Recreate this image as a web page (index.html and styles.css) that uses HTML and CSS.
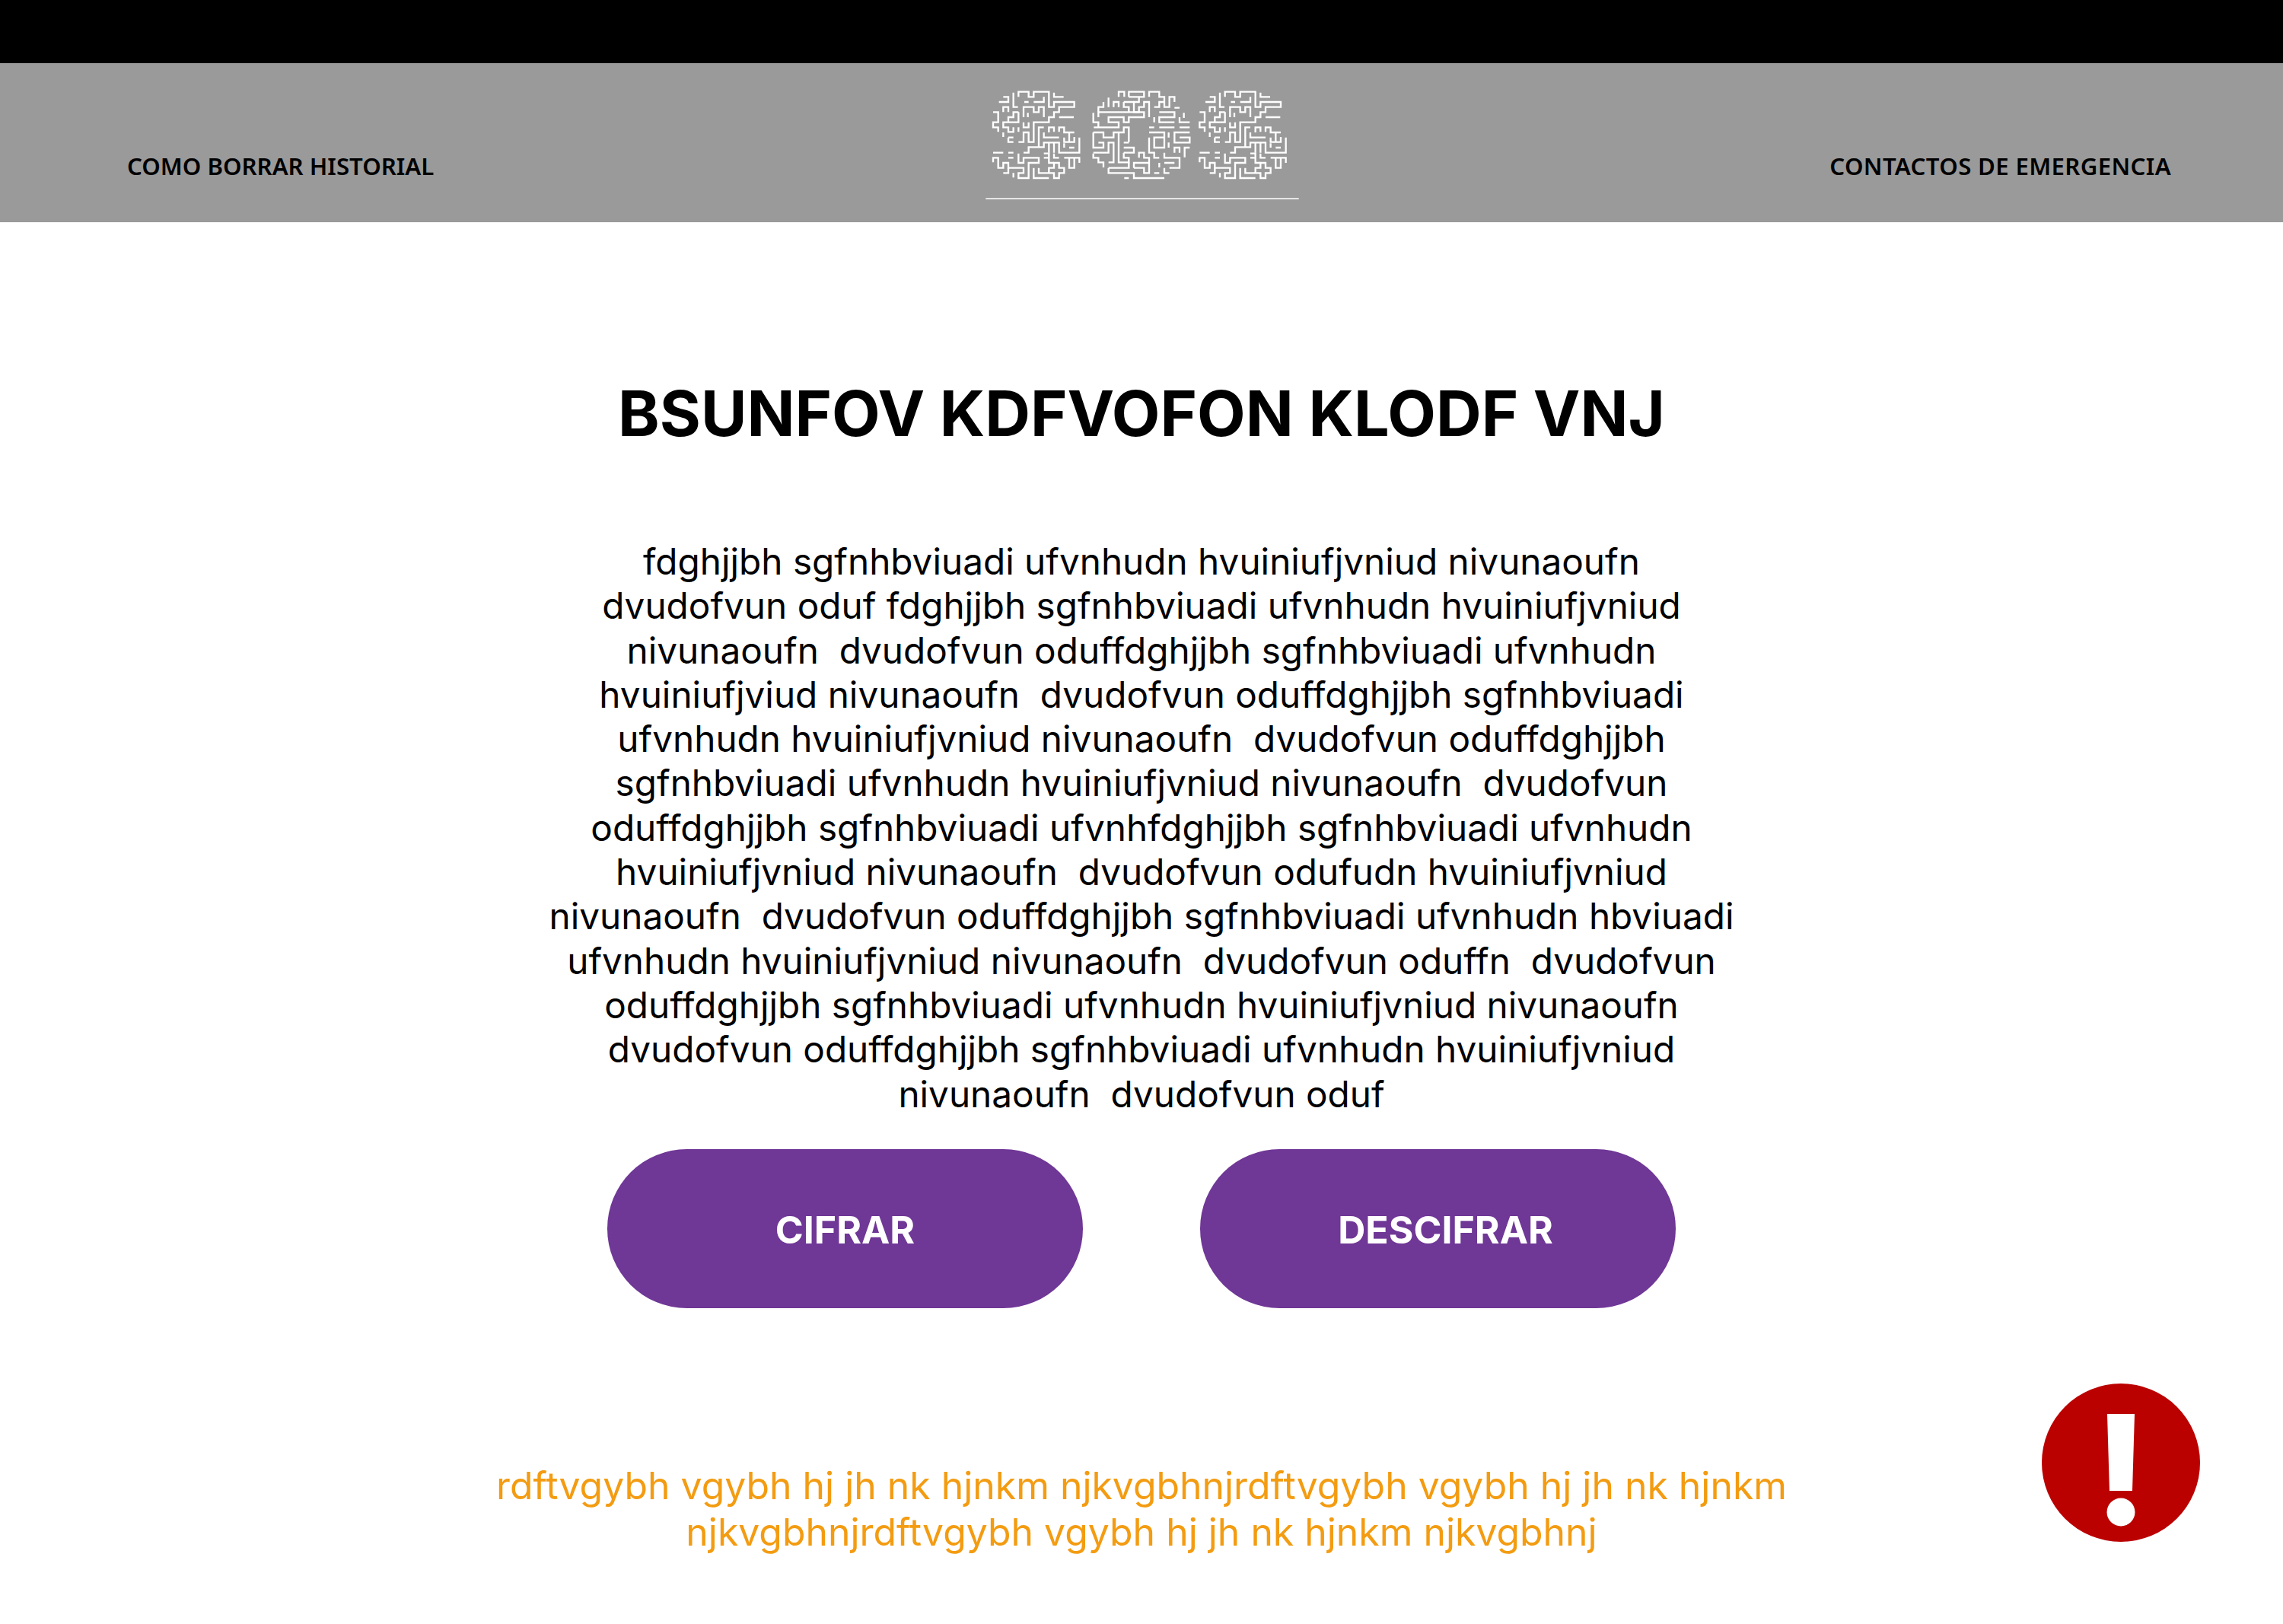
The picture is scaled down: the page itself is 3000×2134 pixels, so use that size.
FILE: index.html
```html
<!DOCTYPE html>
<html lang="es">
<head>
    <meta charset="UTF-8">
    <meta name="viewport" content="width=device-width, initial-scale=1.0">
    <title>SOS</title>
    <link rel="stylesheet" href="styles.css">
</head>
<body>

<div class="top-bar"></div>

<header class="site-header">
    <a class="nav-link nav-link-left" href="#">COMO BORRAR HISTORIAL</a>
    <div class="logo">
        <svg class="logo-maze" viewBox="0 0 1380 570" width="460" height="190" aria-label="SOS">
            <g id="maze-s" class="maze-lines">
                <path d="M128 132H165V112H145M185 95V152H203M205 112V92H245V112H265V92H325V152H345V132H425V152H365V172H345V192H325V212H265V290H245V252H225V290H205"/>
                <path d="M228 132H245M265 132H305V112M345 95V112H383M145 172V152H165V172M225 192V152H265V172H285V152H305V192M242 175V192M365 192H423"/>
                <path d="M105 172H125V212H105V232H125V250M205 172H185V192H165V212H145V232H165V250H185V232M205 172V212H165M205 232V250M225 212V232H245V212"/>
                <path d="M165 272V290H185M165 272H185M145 252V270M305 232H285V310M305 252V272H365M325 252V232H345V250M365 250V232H385V252H405V290H425V270M405 252H425M385 272V290H405"/>
                <path d="M445 272V332H365V292H305V310H245V332H225M325 292V332M345 332V292M405 312H425M385 295V312M105 332H145M165 332H185M165 352H185"/>
                <path d="M105 370V352H125V392H145V372H165V392H225V412H205V432H245V372H285V352H225V372H205V335M305 335H325V352H305M325 352V372H345M345 335V352H365M385 352H445V372M405 352V392H425V352"/>
                <path d="M265 392V432H325M285 392V412H325V392H345V372H365V392H385V412H365V432H345V412H325M145 412H165V392M185 412V430"/>
            </g>
            <g class="maze-lines">
                <path d="M600 112V92H622V112M640 112V92H700V112H680V132H660V172H680V152H700V132H720V192M640 112H680M720 112V92H760V112H780V132H760V152H740M780 132V152H800V112H820V132"/>
                <path d="M560 115V152M580 152V132H600V152M620 132H660M620 132V152H640V172M520 172V152H540V132M820 155H840"/>
                <path d="M520 192V172H700V192H640V212H620V192H560V212H600V232H520V212H500V175M502 232H520"/>
                <path d="M740 192V212M760 172H820V192H760V212H780M780 212H820M760 232H820M857 175V195M840 192V212H880M840 232H880M720 232H740"/>
                <path d="M500 252H540V272H580V252H620V232H640V290M500 252V312H540V292H520M620 292H640M500 332H560V292H580V370H560M600 252V370H640V352H620V332M620 312H660V332H620"/>
                <path d="M720 272V332H740V352H760M780 272H740V312H780V252H720M797 252V272M797 292V312M880 252H820V292H880V272H840M820 332V312H840V332M860 350V312H880"/>
                <path d="M500 335V352H520V370H540V390M680 352V332H700V352H720V372M660 392V372H720V412H700V392H660M780 332V352H840V392H800M780 372H820M760 372V390"/>
                <path d="M560 392V412H660V432H780M560 392H640V370M740 412H760M780 392V412H800M622 432H640"/>
            </g>
            <use href="#maze-s" x="814"/>
            <path class="logo-rule" d="M76 513H1310"/>
        </svg>
    </div>
    <a class="nav-link nav-link-right" href="#">CONTACTOS DE EMERGENCIA</a>
</header>

<main class="content">
    <h1>BSUNFOV KDFVOFON KLODF VNJ</h1>
    <p class="intro">fdghjjbh sgfnhbviuadi ufvnhudn hvuiniufjvniud nivunaoufn
dvudofvun oduf fdghjjbh sgfnhbviuadi ufvnhudn hvuiniufjvniud
nivunaoufn  dvudofvun oduffdghjjbh sgfnhbviuadi ufvnhudn
hvuiniufjviud nivunaoufn  dvudofvun oduffdghjjbh sgfnhbviuadi
ufvnhudn hvuiniufjvniud nivunaoufn  dvudofvun oduffdghjjbh
sgfnhbviuadi ufvnhudn hvuiniufjvniud nivunaoufn  dvudofvun
oduffdghjjbh sgfnhbviuadi ufvnhfdghjjbh sgfnhbviuadi ufvnhudn
hvuiniufjvniud nivunaoufn  dvudofvun odufudn hvuiniufjvniud
nivunaoufn  dvudofvun oduffdghjjbh sgfnhbviuadi ufvnhudn hbviuadi
ufvnhudn hvuiniufjvniud nivunaoufn  dvudofvun oduffn  dvudofvun
oduffdghjjbh sgfnhbviuadi ufvnhudn hvuiniufjvniud nivunaoufn
dvudofvun oduffdghjjbh sgfnhbviuadi ufvnhudn hvuiniufjvniud
nivunaoufn  dvudofvun oduf</p>
    <div class="actions">
        <button class="pill-button">CIFRAR</button>
        <button class="pill-button pill-button-wide">DESCIFRAR</button>
    </div>
</main>

<footer class="site-footer">
    <p class="notice">rdftvgybh vgybh hj jh nk hjnkm njkvgbhnjrdftvgybh vgybh hj jh nk hjnkm
njkvgbhnjrdftvgybh vgybh hj jh nk hjnkm njkvgbhnj</p>
    <svg class="alert-icon" viewBox="0 0 208 208" width="208" height="208" aria-label="Alerta">
        <circle cx="104" cy="104" r="104" fill="#bb0000"/>
        <path d="M86 40H122L119 141H89Z" fill="#fff"/>
        <circle cx="104" cy="169" r="18.5" fill="#fff"/>
    </svg>
</footer>

</body>
</html>
```

FILE: styles.css
```css
* {
    box-sizing: border-box;
    margin: 0;
    padding: 0;
}
body {
    font-family: 'Inter', sans-serif;
    background-color: white;
    color: black;
    margin: 0;
    height: 2134px;
    overflow: hidden;
}
.top-bar {
    height: 83px;
    background-color: black;
}
.site-header {
    display: grid;
    grid-template-columns: 1fr 460px 1fr;
    height: 209px;
    padding: 0 147px;
    background-color: #9a9a9a;
}
.nav-link {
    align-self: center;
    margin-top: 60px;
    font-family: 'Noto Sans', sans-serif;
    font-size: 31.2px;
    font-weight: 600;
    color: black;
    text-decoration: none;
}
.nav-link-left {
    margin-left: 20px;
}
.nav-link-right {
    justify-self: end;
    letter-spacing: 0.35px;
}
.logo {
    display: flex;
    justify-content: center;
    padding-top: 7px;
}
.logo-maze {
    display: block;
}
.maze-lines path {
    fill: none;
    stroke: white;
    stroke-width: 7;
}
.logo-rule {
    fill: none;
    stroke: white;
    stroke-width: 5;
}
.content {
    display: flex;
    flex-direction: column;
    align-items: center;
    padding-top: 203px;
}
h1 {
    font-size: 82.7px;
    font-weight: 700;
    line-height: 96px;
    margin-bottom: 118px;
}
.intro {
    font-size: 47.7px;
    line-height: 58.3px;
    text-align: center;
    white-space: pre-wrap;
}
.actions {
    display: flex;
    gap: 154px;
    margin-top: 43px;
}
.pill-button {
    width: 625px;
    height: 209px;
    padding-top: 3px;
    border: none;
    border-radius: 105px;
    background-color: #6f3796;
    color: white;
    font-family: 'Inter', sans-serif;
    font-size: 50px;
    font-weight: 700;
    cursor: pointer;
}
.pill-button-wide {
    padding-left: 20px;
}
.site-footer {
    display: flex;
    justify-content: center;
    padding-top: 203px;
    position: relative;
}
.notice {
    font-size: 49.9px;
    line-height: 61px;
    text-align: center;
    white-space: pre-wrap;
    color: #f39c12;
}
.alert-icon {
    position: absolute;
    top: 99px;
    right: 109px;
}
```
